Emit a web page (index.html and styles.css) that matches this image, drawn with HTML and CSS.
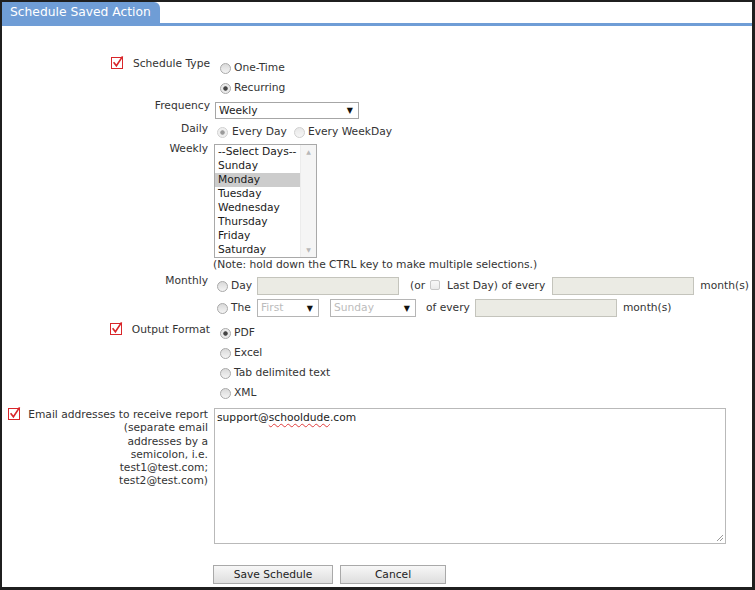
FILE: index.html
```html
<!DOCTYPE html>
<html lang="en">
<head>
    <meta charset="UTF-8">
    <meta name="viewport" content="width=device-width, initial-scale=1.0">
    <title>Schedule Saved Action</title>
    <link rel="stylesheet" href="styles.css">
</head>
<body>
    <div class="window">
        <div class="tabbar">
            <div class="tab">Schedule Saved Action</div>
        </div>

        <form class="schedule-form" action="#" method="post">
            <!-- tipo de agendamento -->
            <div class="row row-type">
                <div class="label wide">
                    <svg class="req" width="13" height="13" viewBox="0 0 13 13"><rect x="0.5" y="1.5" width="11" height="11" fill="none" stroke="#d9262a"/><path d="M2.6 6.2 L5.4 9.8 L11.6 0.4" fill="none" stroke="#d9262a" stroke-width="1.6"/></svg>
                    <span>Schedule Type</span>
                </div>
                <div class="field options">
                    <label class="opt"><input type="radio" name="type" value="once">One-Time</label>
                    <label class="opt"><input type="radio" name="type" value="recurring" checked>Recurring</label>
                </div>
            </div>

            <div class="row row-freq">
                <div class="label wide">Frequency</div>
                <div class="field">
                    <span class="select freq">
                        <select name="frequency">
                            <option>Daily</option>
                            <option selected>Weekly</option>
                            <option>Monthly</option>
                        </select>
                        <span class="arrow">&#9660;</span>
                    </span>
                </div>
            </div>

            <div class="row row-daily">
                <div class="label">Daily</div>
                <div class="field inline">
                    <label class="opt"><input type="radio" name="daily" checked disabled>Every Day</label>
                    <label class="opt second"><input type="radio" name="daily" disabled>Every WeekDay</label>
                </div>
            </div>

            <div class="row row-weekly">
                <div class="label">Weekly</div>
                <div class="field">
                    <div class="listbox">
                        <ul class="list-items">
                            <li>--Select Days--</li>
                            <li>Sunday</li>
                            <li class="selected">Monday</li>
                            <li>Tuesday</li>
                            <li>Wednesday</li>
                            <li>Thursday</li>
                            <li>Friday</li>
                            <li>Saturday</li>
                        </ul>
                        <div class="scrollbar">
                            <span class="scroll-arrow">&#9650;</span>
                            <span class="scroll-arrow">&#9660;</span>
                        </div>
                    </div>
                    <div class="note">(Note: hold down the CTRL key to make multiple selections.)</div>
                </div>
            </div>

            <div class="row row-monthly">
                <div class="label">Monthly</div>
                <div class="field">
                    <div class="month-line">
                        <label class="opt lead"><input type="radio" name="monthly">Day</label>
                        <input type="text" class="text-input" disabled>
                        <span class="or">(or</span>
                        <input type="checkbox" class="check" disabled>
                        <span class="last-day">Last Day) of every</span>
                        <input type="text" class="text-input every" disabled>
                        <span class="months">month(s)</span>
                    </div>
                    <div class="month-line">
                        <label class="opt lead"><input type="radio" name="monthly">The</label>
                        <span class="select off first">
                            <select disabled><option>First</option></select>
                            <span class="arrow">&#9660;</span>
                        </span>
                        <span class="select off weekday">
                            <select disabled><option>Sunday</option></select>
                            <span class="arrow">&#9660;</span>
                        </span>
                        <span class="of-every">of every</span>
                        <input type="text" class="text-input every2" disabled>
                        <span class="months">month(s)</span>
                    </div>
                </div>
            </div>

            <div class="row row-output">
                <div class="label wide">
                    <svg class="req" width="13" height="13" viewBox="0 0 13 13"><rect x="0.5" y="1.5" width="11" height="11" fill="none" stroke="#d9262a"/><path d="M2.6 6.2 L5.4 9.8 L11.6 0.4" fill="none" stroke="#d9262a" stroke-width="1.6"/></svg>
                    <span>Output Format</span>
                </div>
                <div class="field options">
                    <label class="opt"><input type="radio" name="format" checked>PDF</label>
                    <label class="opt"><input type="radio" name="format">Excel</label>
                    <label class="opt"><input type="radio" name="format">Tab delimited text</label>
                    <label class="opt"><input type="radio" name="format">XML</label>
                </div>
            </div>

            <div class="row row-email">
                <div class="label email-label">
                    <svg class="req" width="13" height="13" viewBox="0 0 13 13"><rect x="0.5" y="1.5" width="11" height="11" fill="none" stroke="#d9262a"/><path d="M2.6 6.2 L5.4 9.8 L11.6 0.4" fill="none" stroke="#d9262a" stroke-width="1.6"/></svg>
                    <span class="email-text">Email addresses to receive report<br>(separate email<br>addresses by a<br>semicolon, i.e.<br>test1@test.com;<br>test2@test.com)</span>
                </div>
                <div class="field">
                    <div class="textarea" role="textbox" aria-multiline="true">
                        support@<span class="misspelled">schooldude</span>.com
                        <svg class="grip" width="9" height="9" viewBox="0 0 9 9"><path d="M8 2 L2 8 M8 5 L5 8" stroke="#999" stroke-width="1"/></svg>
                    </div>
                </div>
            </div>

            <div class="buttons">
                <button type="submit" class="btn btn-save">Save Schedule</button>
                <button type="button" class="btn btn-cancel">Cancel</button>
            </div>
        </form>
    </div>
</body>
</html>
```

FILE: styles.css
```css
body {
    margin: 0;
    font-family: "DejaVu Sans", Verdana, sans-serif;
    font-size: 10.7px;
    color: #333;
    background: #fff;
}

.window {
    width: 755px;
    height: 590px;
    box-sizing: border-box;
    border-style: solid;
    border-color: #1f1f1f;
    border-width: 2px 3px 3px 2px;
    overflow: hidden;
}

/* aba do topo */
.tabbar {
    border-bottom: 3px solid #6f9dd6;
}

.tab {
    width: 150px;
    height: 21px;
    line-height: 21px;
    padding-left: 8px;
    background: #6f9dd6;
    color: #fff;
    font-size: 12.3px;
    border-top-right-radius: 6px;
}

.schedule-form {
    padding-top: 31px;
}

.row {
    display: flex;
    align-items: flex-start;
}

.label {
    width: 206px;
    padding-right: 2px;
    flex-shrink: 0;
    line-height: 14px;
    text-align: right;
    display: flex;
    justify-content: flex-end;
    align-items: flex-start;
}

.label.wide {
    padding-right: 0;
    width: 208px;
}

.req {
    margin-right: 9px;
    margin-top: -1px;
    flex-shrink: 0;
}

.field {
    padding-left: 4px;
    line-height: 14px;
}

/* espacamento vertical das linhas */
.row-freq { margin-top: 1px; }
.row-daily { margin-top: 3px; }
.row-weekly { margin-top: 3px; }
.row-monthly { margin-top: 2px; }
.row-output { margin-top: 4px; }
.row-email { margin-top: 5px; }

.options {
    padding-top: 1px;
}

.options .opt {
    display: flex;
    align-items: center;
    height: 20px;
    padding-left: 6px;
}

.row-output .options {
    padding-top: 0;
}

.opt input {
    margin: 0 3px 0 0;
}

/* radios no estilo antigo */
input[type="radio"] {
    -webkit-appearance: none;
    appearance: none;
    width: 11px;
    height: 11px;
    border-radius: 50%;
    border: 1px solid #a9a9a9;
    background: linear-gradient(#d9d9d9, #f4f4f4);
    box-sizing: border-box;
    flex-shrink: 0;
}

input[type="radio"]:checked {
    background: radial-gradient(circle, #444 0, #444 1.8px, #e6e6e6 2.6px, #f2f2f2 100%);
}

input[type="radio"]:disabled {
    border-color: #d0d0d0;
    background: linear-gradient(#e8e8e8, #f6f6f6);
}

input[type="radio"]:disabled:checked {
    background: radial-gradient(circle, #9a9a9a 0, #9a9a9a 1.8px, #ececec 2.6px, #f6f6f6 100%);
}

.inline {
    display: flex;
    align-items: center;
    height: 14px;
    margin-top: 3px;
}

.inline .opt {
    display: flex;
    align-items: center;
    padding-left: 3px;
}

.inline .opt input {
    margin-right: 4px;
}

.inline .opt.second {
    padding-left: 7px;
}

.inline .opt.second input {
    margin-right: 3px;
}

/* selects */
.select {
    display: inline-flex;
    align-items: center;
    height: 17px;
    box-sizing: border-box;
    border: 1px solid #a6a6a6;
    background: #fff;
}

.select select {
    -webkit-appearance: none;
    appearance: none;
    border: none;
    background: transparent;
    font: inherit;
    color: #222;
    padding: 0 0 0 3px;
    flex: 1;
    height: 15px;
    outline: none;
}

.select .arrow {
    font-size: 8px;
    color: #111;
    padding-right: 5px;
    line-height: 15px;
}

.select.freq {
    width: 144px;
    margin-top: 3px;
    margin-left: 1px;
}

.select.off {
    border-color: #b5b5b5;
}

.select.off select {
    color: #a0a0a0;
}

.select.first {
    width: 62px;
    height: 18px;
}

.select.weekday {
    width: 86px;
    margin-left: 11px;
    height: 18px;
}

/* lista de dias */
.listbox {
    display: flex;
    width: 103px;
    height: 114px;
    box-sizing: border-box;
    border: 1px solid #a9a9a9;
    margin-top: 2px;
}

.list-items {
    list-style: none;
    margin: 0;
    padding: 0;
    flex: 1;
}

.list-items li {
    height: 14px;
    line-height: 14px;
    padding-left: 3px;
    color: #1a1a1a;
}

.list-items li.selected {
    background: #cccccc;
}

.scrollbar {
    width: 15px;
    background: #f5f5f5;
    border-left: 1px solid #ececec;
    display: flex;
    flex-direction: column;
    justify-content: space-between;
    align-items: center;
}

.scroll-arrow {
    font-size: 6px;
    color: #b8b8b8;
    line-height: 14px;
}

.note {
    margin-left: -1px;
    height: 14px;
}

/* mensal */
.month-line {
    display: flex;
    align-items: center;
    height: 22px;
    white-space: nowrap;
}

.row-monthly .field {
    margin-top: 1px;
}

.month-line .opt.lead {
    display: flex;
    align-items: center;
    width: 43px;
    padding-left: 3px;
    box-sizing: border-box;
}

.month-line .opt input {
    margin-right: 3px;
}

.text-input {
    width: 142px;
    height: 18px;
    box-sizing: border-box;
    border: 1px solid #c4c4bc;
    background: #ebebe4;
    margin: 0;
    padding: 0;
}

.or {
    margin-left: 11px;
}

.check {
    -webkit-appearance: none;
    appearance: none;
    width: 10px;
    height: 10px;
    box-sizing: border-box;
    border: 1px solid #c8c8c8;
    border-radius: 2px;
    background: linear-gradient(#f8f8f8, #ebebeb);
    margin: 0 0 2px 5px;
}

.last-day {
    margin-left: 7px;
}

.text-input.every {
    margin-left: 7px;
}

.months {
    margin-left: 6px;
}

.of-every {
    margin-left: 10px;
}

.text-input.every2 {
    margin-left: 5px;
}

/* email */
.email-label {
    justify-content: space-between;
    line-height: 13.3px;
}

.email-label .req {
    margin-left: 6px;
    margin-right: 0;
    margin-top: -1px;
}

.email-text {
    text-align: right;
}

.textarea {
    position: relative;
    width: 512px;
    height: 136px;
    box-sizing: border-box;
    border: 1px solid #b9b9b9;
    padding: 2px 2px;
    line-height: 14px;
    color: #222;
}

.misspelled {
    text-decoration: underline wavy #e03c3c;
    text-decoration-thickness: 1px;
    text-underline-offset: 2px;
}

.grip {
    position: absolute;
    right: 1px;
    bottom: 1px;
}

/* botoes */
.buttons {
    margin-top: 21px;
    padding-left: 211px;
    display: flex;
    gap: 7px;
}

.btn {
    height: 19px;
    box-sizing: border-box;
    border: 1px solid #a9a9a9;
    background: linear-gradient(#f7f7f7, #dedede);
    font: inherit;
    color: #222;
    padding: 0;
    cursor: pointer;
}

.btn-save {
    width: 120px;
}

.btn-cancel {
    width: 106px;
}
```
